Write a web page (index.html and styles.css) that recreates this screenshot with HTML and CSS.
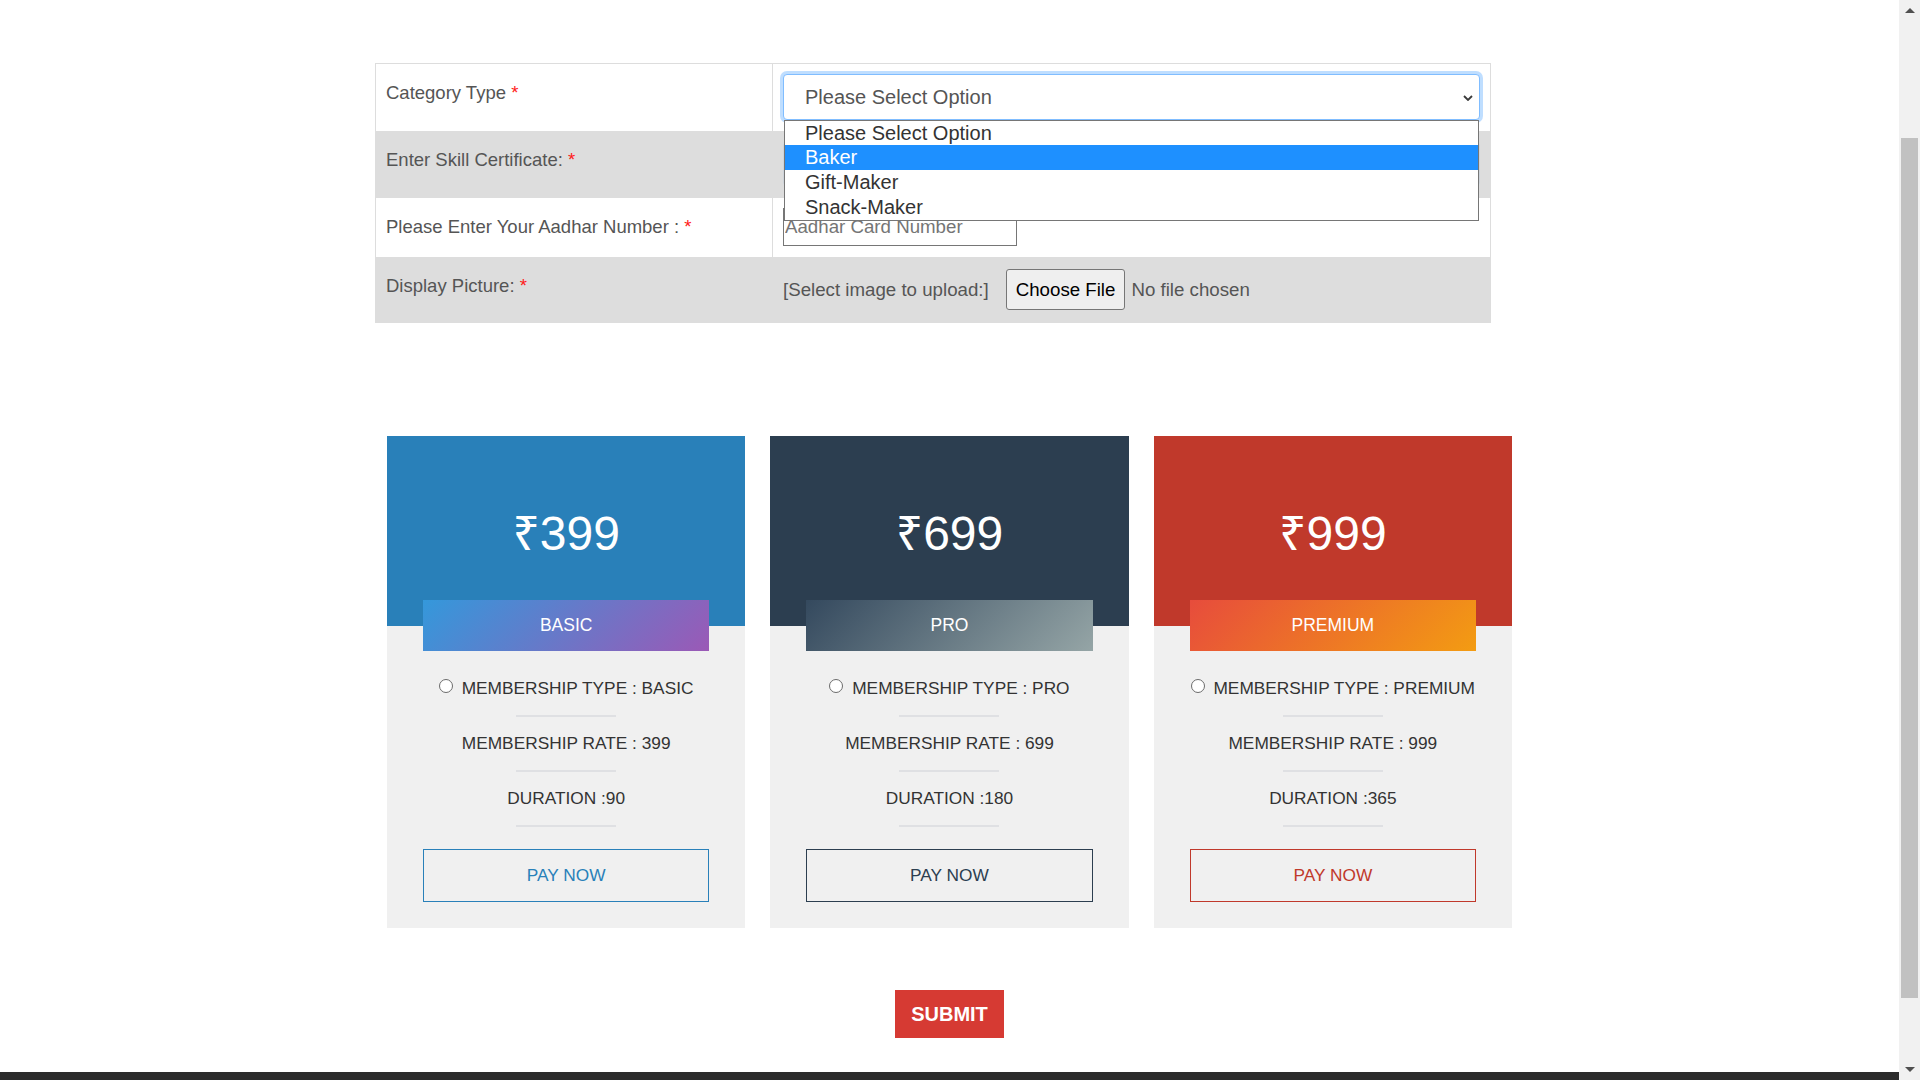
FILE: index.html
```html
<!DOCTYPE html>
<html lang="en">
<head>
<meta charset="utf-8">
<title>Membership Registration</title>
<link rel="stylesheet" href="styles.css">
</head>
<body>
<div class="screen">
  <main class="page">
    <div class="container">
      <div class="form-table">
        <div class="row">
          <div class="label">Category Type <span class="req">*</span></div>
          <div class="field">
            <div class="select-box" role="combobox" aria-expanded="true">
              <span>Please Select Option</span>
              <svg class="chev" width="10" height="6" viewBox="0 0 10 6"><path d="M1 1l4 4 4-4" fill="none" stroke="#3a3a3a" stroke-width="1.8"/></svg>
            </div>
            <ul class="dropdown" role="listbox">
              <li>Please Select Option</li>
              <li class="active">Baker</li>
              <li>Gift-Maker</li>
              <li>Snack-Maker</li>
            </ul>
          </div>
        </div>
        <div class="row alt">
          <div class="label">Enter Skill Certificate: <span class="req">*</span></div>
          <div class="field">
            <input class="tall-input" type="text" placeholder="Skill Certificate">
          </div>
        </div>
        <div class="row">
          <div class="label">Please Enter Your Aadhar Number : <span class="req">*</span></div>
          <div class="field">
            <input class="aadhar" type="text" placeholder="Aadhar Card Number">
          </div>
        </div>
        <div class="row alt">
          <div class="label">Display Picture: <span class="req">*</span></div>
          <div class="field file-field">
            <span class="hint">[Select image to upload:]</span>
            <button class="file-btn" type="button">Choose File</button>
            <span class="no-file">No file chosen</span>
          </div>
        </div>
      </div>

      <div class="plans">
        <div class="card basic">
          <div class="card-head">₹399</div>
          <div class="badge">BASIC</div>
          <ul class="features">
            <li><label><input type="radio" name="plan"> MEMBERSHIP TYPE : BASIC</label></li>
            <li>MEMBERSHIP RATE : 399</li>
            <li>DURATION :90</li>
          </ul>
          <button class="pay" type="button">PAY NOW</button>
        </div>
        <div class="card pro">
          <div class="card-head">₹699</div>
          <div class="badge">PRO</div>
          <ul class="features">
            <li><label><input type="radio" name="plan"> MEMBERSHIP TYPE : PRO</label></li>
            <li>MEMBERSHIP RATE : 699</li>
            <li>DURATION :180</li>
          </ul>
          <button class="pay" type="button">PAY NOW</button>
        </div>
        <div class="card premium">
          <div class="card-head">₹999</div>
          <div class="badge">PREMIUM</div>
          <ul class="features">
            <li><label><input type="radio" name="plan"> MEMBERSHIP TYPE : PREMIUM</label></li>
            <li>MEMBERSHIP RATE : 999</li>
            <li>DURATION :365</li>
          </ul>
          <button class="pay" type="button">PAY NOW</button>
        </div>
      </div>

      <div class="submit-wrap">
        <button class="submit" type="submit">SUBMIT</button>
      </div>
    </div>
    <footer class="footer"></footer>
  </main>
  <div class="scrollbar" aria-hidden="true">
    <div class="sb-btn"><svg width="10" height="5" viewBox="0 0 10 5"><polygon points="0,5 5,0 10,5" fill="#505050"/></svg></div>
    <div class="sb-track"><div class="sb-thumb"></div></div>
    <div class="sb-btn"><svg width="10" height="5" viewBox="0 0 10 5"><polygon points="0,0 10,0 5,5" fill="#505050"/></svg></div>
  </div>
</div>
</body>
</html>
```

FILE: styles.css
```css
* { box-sizing: border-box; }

body {
  margin: 0;
  font-family: "Liberation Sans", Arial, "Noto Sans", "DejaVu Sans", sans-serif;
  background: #fff;
}

.screen {
  display: flex;
  height: 1080px;
  overflow: hidden;
}

.page {
  flex: 1;
  min-width: 0;
  display: flex;
  flex-direction: column;
}

.container {
  width: 1149px;
  margin: 0 auto;
  padding-top: 63px;
}

/* ---------- form table ---------- */
.form-table {
  width: 1116px;
  border: 1px solid #dddddd;
  border-bottom: 0;
}

.row {
  display: grid;
  grid-template-columns: 397px 1fr;
}

.row.alt { background: #dddddd; }

.label {
  border-right: 1px solid #dddddd;
  padding: 18px 10px 0 10px;
  line-height: 22px;
  font-size: 18.5px;
  color: #555555;
}

.req { color: #ff1a1a; }

.field {
  position: relative;
  padding: 10px 10px 11px 10px;
}

.select-box {
  height: 46px;
  display: flex;
  align-items: center;
  justify-content: space-between;
  padding: 0 6px 0 21px;
  background: #fff;
  border: 1px solid #80bdff;
  border-radius: 4px;
  box-shadow: 0 0 0 3px rgba(0, 123, 255, 0.25);
  font-size: 20px;
  color: #555555;
}

.chev { margin-top: 2px; }

.dropdown {
  position: absolute;
  z-index: 10;
  top: 56px;
  left: 11px;
  right: 11px;
  margin: 0;
  padding: 0;
  list-style: none;
  background: #fff;
  border: 1px solid #767676;
  font-size: 20px;
  line-height: 25px;
  color: #333333;
}

.dropdown li { padding-left: 20px; }
.dropdown li:first-child { line-height: 24px; }

.dropdown li.active {
  background: #1e90ff;
  color: #fff;
}

.tall-input {
  display: block;
  width: 100%;
  height: 46px;
  border: 1px solid #ced4da;
  border-radius: 4px;
  font-family: inherit;
  font-size: 20px;
  padding: 0 21px;
}

.aadhar {
  display: block;
  width: 234px;
  height: 38px;
  border: 1px solid #767676;
  border-radius: 0;
  padding: 0 1px;
  font-family: inherit;
  font-size: 18.7px;
  color: #333;
  background: #fff;
}

.aadhar::placeholder { color: #757575; }

.file-field {
  display: flex;
  align-items: center;
  padding-top: 12px;
  padding-bottom: 13px;
  font-size: 18.7px;
  color: #555555;
}

.hint { margin-right: 17px; }

.file-btn {
  height: 41px;
  padding: 0 9px;
  font-family: inherit;
  font-size: 18.7px;
  color: #000;
  background: #efefef;
  border: 1px solid #767676;
  border-radius: 3px;
}

.no-file { margin-left: 6px; }

/* ---------- plans ---------- */
.plans {
  display: grid;
  grid-template-columns: repeat(3, 1fr);
  gap: 25px;
  padding: 0 12px;
  margin-top: 113px;
}

.card {
  background: #f0f0f0;
  text-align: center;
  padding-bottom: 26px;
}

.card-head {
  height: 190px;
  display: flex;
  align-items: center;
  justify-content: center;
  font-size: 48px;
  color: #fff;
}

.badge {
  margin: -26px 36px 0;
  height: 51px;
  line-height: 51px;
  font-size: 17.5px;
  color: #fff;
}

.features {
  list-style: none;
  margin: 27px 0 0;
  padding: 0;
  font-size: 17.3px;
  line-height: 20px;
  color: #333333;
}

.features li::after {
  content: "";
  display: block;
  width: 100px;
  height: 2px;
  margin: 17px auto 0;
  background: #dfe0e3;
}

.features li + li { margin-top: 16px; }

.features input {
  appearance: none;
  -webkit-appearance: none;
  display: inline-block;
  width: 14px;
  height: 14px;
  margin: 0 4px 0 0;
  border: 1px solid #6b6b6b;
  border-radius: 50%;
  background: #fff;
  vertical-align: 1px;
}

.pay {
  display: block;
  width: calc(100% - 72px);
  height: 53px;
  margin: 22px 36px 0;
  background: transparent;
  font-family: inherit;
  font-size: 17.3px;
  border: 1px solid;
}

.basic .card-head { background: #2980b9; }
.basic .badge { background: linear-gradient(135deg, #3498db, #9b59b6); }
.basic .pay { color: #2980b9; border-color: #2980b9; }

.pro .card-head { background: #2c3e50; }
.pro .badge { background: linear-gradient(135deg, #34495e, #95a5a6); }
.pro .pay { color: #2c3e50; border-color: #2c3e50; }

.premium .card-head { background: #c0392b; }
.premium .badge { background: linear-gradient(135deg, #e74c3c, #f39c12); }
.premium .pay { color: #c0392b; border-color: #c0392b; }

/* ---------- submit ---------- */
.submit-wrap {
  text-align: center;
  margin-top: 62px;
}

.submit {
  height: 48px;
  padding: 0 16px;
  border: 0;
  border-radius: 0;
  background: #d63a33;
  color: #fff;
  font-family: inherit;
  font-weight: bold;
  font-size: 20px;
}

.footer {
  margin-top: 34px;
  height: 60px;
  flex-shrink: 0;
  background: #2b2b2b;
}

/* ---------- scrollbar ---------- */
.scrollbar {
  width: 21px;
  flex-shrink: 0;
  display: flex;
  flex-direction: column;
  background: #f1f1f1;
}

.sb-btn {
  height: 21px;
  display: flex;
  align-items: center;
  justify-content: center;
}

.sb-track { flex: 1; }

.sb-thumb {
  margin: 117px 2px 0;
  height: 860px;
  background: #c1c1c1;
}
```
